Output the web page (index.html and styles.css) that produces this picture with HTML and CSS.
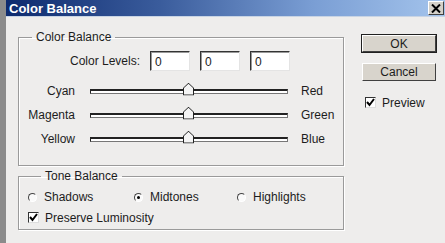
FILE: index.html
```html
<!DOCTYPE html>
<html>
	<head>
		<meta charset="UTF-8">
		<title>Color Balance</title>
		<link rel="stylesheet" href="styles.css">
	</head>
	<body>
		<div class="edge"></div>
		<div class="window">
			<div class="titlebar">
				<span class="title">Color Balance</span>
				<span class="close">
					<svg width="10" height="9" viewBox="0 0 10 9"><path d="M1 0.5 L9 8.5 M9 0.5 L1 8.5" stroke="#000" stroke-width="2"/></svg>
				</span>
			</div>
			<div class="client">
				<div class="groups">
					<fieldset class="group balance">
						<legend>Color Balance</legend>
						<div class="levels">
							<span class="levels-label">Color Levels:</span>
							<span class="field">0</span>
							<span class="field">0</span>
							<span class="field">0</span>
						</div>
						<div class="slider-row">
							<span class="left-label">Cyan</span>
							<div class="track"><span class="thumb"></span></div>
							<span class="right-label">Red</span>
						</div>
						<div class="slider-row">
							<span class="left-label">Magenta</span>
							<div class="track"><span class="thumb"></span></div>
							<span class="right-label">Green</span>
						</div>
						<div class="slider-row">
							<span class="left-label">Yellow</span>
							<div class="track"><span class="thumb"></span></div>
							<span class="right-label">Blue</span>
						</div>
					</fieldset>
					<fieldset class="group tone">
						<legend>Tone Balance</legend>
						<div class="radios">
							<label class="radio shadows"><span class="dot"></span>Shadows</label>
							<label class="radio midtones"><span class="dot checked"></span>Midtones</label>
							<label class="radio"><span class="dot"></span>Highlights</label>
						</div>
						<label class="check"><span class="box"><svg width="9" height="9" viewBox="0 0 9 9"><path d="M1 4 L3.5 7 L8 1" fill="none" stroke="#000" stroke-width="2"/></svg></span>Preserve Luminosity</label>
					</fieldset>
				</div>
				<div class="side">
					<div class="button default">OK</div>
					<div class="button">Cancel</div>
					<label class="check preview"><span class="box"><svg width="9" height="9" viewBox="0 0 9 9"><path d="M1 4 L3.5 7 L8 1" fill="none" stroke="#000" stroke-width="2"/></svg></span>Preview</label>
				</div>
			</div>
		</div>
	</body>
</html>
```
FILE: styles.css
```css
*{
	margin: 0;
	padding: 0;
	box-sizing: border-box;
}
body{
	width: 445px;
	height: 243px;
	display: flex;
	overflow: hidden;
	font-family: "Liberation Sans", Arial, sans-serif;
	font-size: 12px;
	color: #1c1c1c;
	background-color: #eeedec;
}
.edge{
	width: 6px;
	background-color: #8b8b8b;
}
.window{
	flex: 1;
	display: flex;
	flex-direction: column;
}
.titlebar{
	height: 17px;
	display: flex;
	align-items: center;
	justify-content: space-between;
	padding: 0 1px 0 3px;
	background: linear-gradient(to right, #0d2a6e 0%, #3a5c9c 35%, #7a9ed4 70%, #a4c4ec 100%);
	border-bottom: 1px solid #c8d4e4;
}
.title{
	color: #fff;
	font-weight: bold;
	font-size: 13px;
}
.close{
	width: 16px;
	height: 14px;
	display: flex;
	align-items: center;
	justify-content: center;
	background-color: #d4d0c8;
	border: 1px solid;
	border-color: #fff #404040 #404040 #fff;
}
.client{
	display: flex;
	padding: 0 0 0 12px;
}
.groups{
	width: 326px;
	padding-top: 13px;
}
.group{
	border: 1px solid #9a9a9a;
	box-shadow: inset 1px 1px 0 #fff, 1px 1px 0 #fff;
}
.group legend{
	margin-left: 13px;
	padding: 0 4px 0 4px;
	line-height: 14px;
}
.balance{
	padding: 7px 0 14px 0;
}
.levels{
	display: flex;
	align-items: center;
	gap: 10px;
}
.levels-label{
	width: 121px;
	text-align: right;
}
.field{
	width: 40px;
	height: 20px;
	padding: 3px 0 0 4px;
	background-color: #fff;
	border: 1px solid;
	border-color: #333 #e4e4e4 #e4e4e4 #333;
	box-shadow: inset 1px 1px 0 #999;
	line-height: 14px;
}
.slider-row{
	display: flex;
	align-items: center;
	height: 24px;
}
.levels + .slider-row{
	margin-top: 8px;
}
.left-label{
	width: 56px;
	text-align: right;
}
.track{
	position: relative;
	width: 198px;
	height: 5px;
	margin: 0 13px 0 15px;
	background-color: #fff;
	border: 1px solid;
	border-color: #222 #777 #777 #222;
	border-top-width: 2px;
}
.thumb{
	position: absolute;
	left: 92px;
	top: -8px;
	width: 11px;
	height: 13px;
	background-color: #f4f4f4;
	clip-path: polygon(50% 0, 100% 40%, 100% 100%, 0 100%, 0 40%);
}
.thumb::before{
	content: "";
	position: absolute;
	inset: 0;
	background-color: #222;
	clip-path: polygon(50% 0, 100% 40%, 100% 100%, 0 100%, 0 40%, 9% 42%, 9% 92%, 91% 92%, 91% 42%, 50% 9%, 9% 42%, 0 40%);
}
.tone{
	margin-top: 3px;
	padding: 4px 0 1px 9px;
}
.radios{
	display: flex;
	height: 20px;
	align-items: center;
}
.radio{
	display: flex;
	align-items: center;
	gap: 7px;
}
.shadows{
	width: 106px;
}
.midtones{
	width: 103px;
}
.dot{
	width: 9px;
	height: 9px;
	border-radius: 50%;
	border: 1px solid;
	border-color: #444 #fff #fff #444;
	background-color: #fafafa;
	position: relative;
}
.dot.checked::after{
	content: "";
	position: absolute;
	left: 2px;
	top: 2px;
	width: 3px;
	height: 3px;
	border-radius: 50%;
	background-color: #000;
}
.check{
	display: flex;
	align-items: center;
	gap: 6px;
	height: 21px;
}
.box{
	width: 11px;
	height: 11px;
	display: flex;
	align-items: center;
	justify-content: center;
	background-color: #fff;
	border: 1px solid;
	border-color: #333 #ddd #ddd #333;
}
.side{
	display: flex;
	flex-direction: column;
	padding: 18px 0 0 18px;
}
.button{
	width: 74px;
	height: 18px;
	display: flex;
	align-items: center;
	justify-content: center;
	background-color: #d8d4cc;
	border: 1px solid;
	border-color: #fff #404040 #404040 #fff;
	margin-bottom: 10px;
}
.button.default{
	height: 17px;
	outline: 1px solid #202020;
	margin-bottom: 11px;
}
.preview{
	margin-top: 1px;
	padding-left: 3px;
}
```
